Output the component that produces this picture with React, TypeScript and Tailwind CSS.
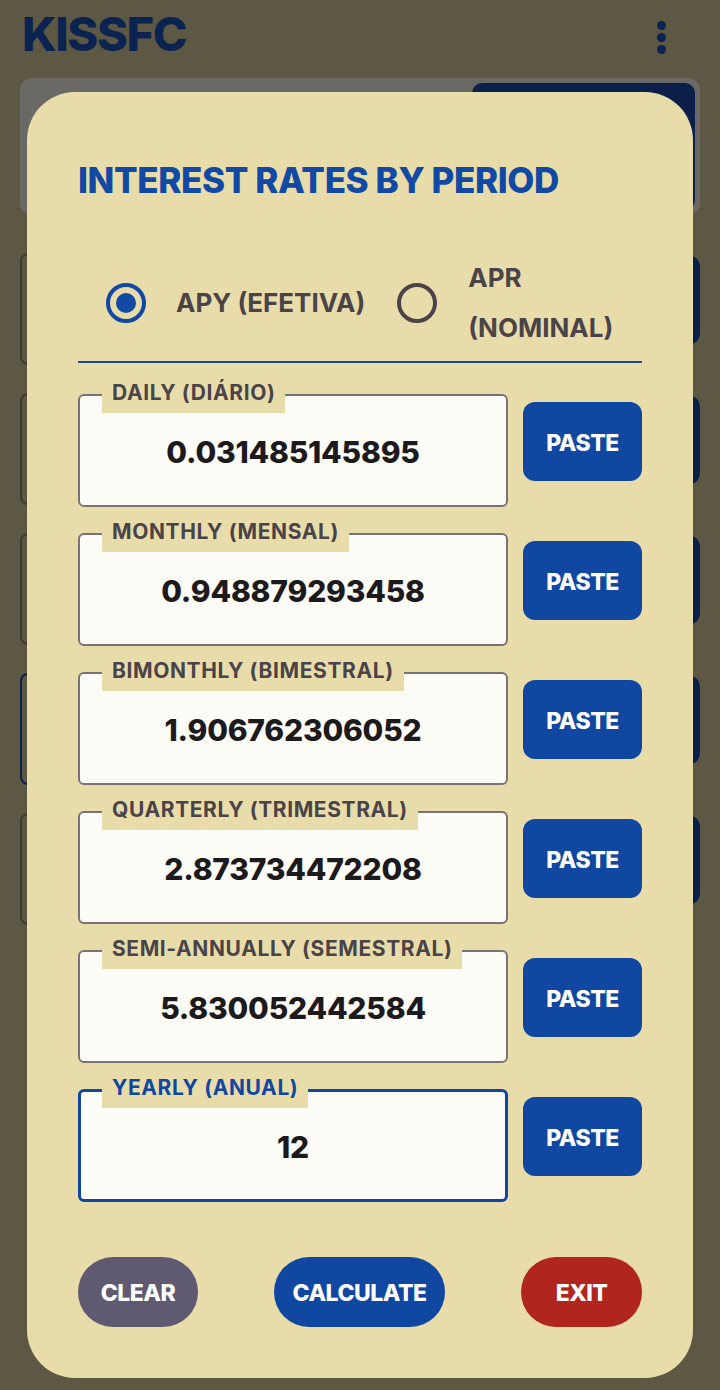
const rates = [
  { label: "DAILY (DIÁRIO)", value: "0.031485145895" },
  { label: "MONTHLY (MENSAL)", value: "0.948879293458" },
  { label: "BIMONTHLY (BIMESTRAL)", value: "1.906762306052" },
  { label: "QUARTERLY (TRIMESTRAL)", value: "2.873734472208" },
  { label: "SEMI-ANNUALLY (SEMESTRAL)", value: "5.830052442584" },
  { label: "YEARLY (ANUAL)", value: "12", focused: true },
];

export default function App() {
  return (
    <main className="relative h-[1390px] w-[720px] overflow-hidden bg-[#5d5843] font-['Inter',sans-serif]">
      {/* Dimmed screen behind the dialog */}
      <header className="flex h-[78px] items-start justify-between pl-[22px] pr-[54px] pt-[10px]">
        <h1 className="text-[47px] font-extrabold leading-none tracking-[-1.4px] text-[#0b2350]">KISSFC</h1>
        <div className="mt-[11px] flex flex-col items-center gap-[3px]">
          <span className="h-[9px] w-[9px] rounded-full bg-[#0b2350]" />
          <span className="h-[9px] w-[9px] rounded-full bg-[#0b2350]" />
          <span className="h-[9px] w-[9px] rounded-full bg-[#0b2350]" />
        </div>
      </header>

      <div className="px-[20px]">
        <div className="flex h-[137px] justify-end rounded-[12px] bg-[#6a6966] p-[5px]">
          <div className="w-[223px] rounded-[10px] bg-[#0c1f48]" />
        </div>

        <div className="mt-[38px] flex flex-col gap-[28px]">
          {[0, 1, 2, 3, 4].map((i) => (
            <div key={i} className="flex items-start gap-[16px]">
              <div
                className={
                  i === 3
                    ? "h-[112px] flex-1 rounded-[8px] border-2 border-[#0c1f48]"
                    : "h-[112px] flex-1 rounded-[8px] border-2 border-[#3c3a33]"
                }
              />
              <div className="mt-[2px] h-[90px] w-[200px] rounded-[12px] bg-[#0c1f48]" />
            </div>
          ))}
        </div>
      </div>

      {/* Dialog */}
      <section className="absolute left-[27px] top-[92px] h-[1286px] w-[666px] rounded-[48px] bg-[#e8dcaa] px-[51px] pt-[68px]">
        <h2 className="text-[35px] font-extrabold leading-[40px] tracking-[-0.4px] text-[#1149a4]">
          INTEREST RATES BY PERIOD
        </h2>

        <div className="mt-[53px] flex h-[100px] items-center pl-[28px] text-[26px] font-bold text-[#4a4448]">
          <span className="flex h-[40px] w-[40px] items-center justify-center rounded-full border-[4px] border-[#1149a4]">
            <span className="h-[20px] w-[20px] rounded-full bg-[#1149a4]" />
          </span>
          <span className="ml-[30px] leading-none">APY (EFETIVA)</span>
          <span className="ml-[32px] h-[40px] w-[40px] rounded-full border-[4px] border-[#4a4448]" />
          <span className="ml-[31px] leading-[50px]">
            APR
            <br />
            (NOMINAL)
          </span>
        </div>

        <div className="mt-[8px] border-t-2 border-[#1c4a94]" />

        <div className="mt-[31px] flex flex-col gap-[26px]">
          {rates.map((r) => (
            <RateRow key={r.label} label={r.label} value={r.value} focused={r.focused} />
          ))}
        </div>

        <div className="mt-[55px] flex items-center justify-between pt-0 text-[23px] font-extrabold tracking-[-0.5px] text-white">
          <button className="h-[70px] w-[120px] rounded-full bg-[#5f5a72] pt-[3px]">CLEAR</button>
          <button className="h-[70px] w-[171px] rounded-full bg-[#0f47a1] pt-[3px]">CALCULATE</button>
          <button className="h-[70px] w-[121px] rounded-full bg-[#b0251e] pt-[3px]">EXIT</button>
        </div>
      </section>
    </main>
  );
}

function RateRow({ label, value, focused }: { label: string; value: string; focused?: boolean }) {
  return (
    <div className="flex items-start gap-[15px]">
      <div
        className={
          focused
            ? "relative flex h-[113px] w-[430px] items-center justify-center rounded-[6px] border-[3px] border-[#0f47a1] bg-[#fdfcf6] pt-[3px]"
            : "relative flex h-[113px] w-[430px] items-center justify-center rounded-[6px] border-2 border-[#7a7374] bg-[#fdfcf6] pt-[3px]"
        }
      >
        <span
          className={
            focused
              ? "absolute left-[21px] top-[-13px] h-[29px] bg-[#e8dcaa] px-[10px] text-[21px] font-bold leading-[18px] tracking-[0.6px] text-[#0f47a1]"
              : "absolute left-[22px] top-[-12px] h-[29px] bg-[#e8dcaa] px-[10px] text-[21px] font-bold leading-[18px] tracking-[0.6px] text-[#4a4448]"
          }
        >
          {label}
        </span>
        <span className="text-[30px] font-extrabold tracking-[-0.2px] text-[#1c1a1c]">{value}</span>
      </div>
      <button className="mt-[8px] h-[79px] w-[119px] rounded-[12px] bg-[#0f47a1] pt-[3px] text-[23px] font-extrabold tracking-[-0.5px] text-white">
        PASTE
      </button>
    </div>
  );
}
